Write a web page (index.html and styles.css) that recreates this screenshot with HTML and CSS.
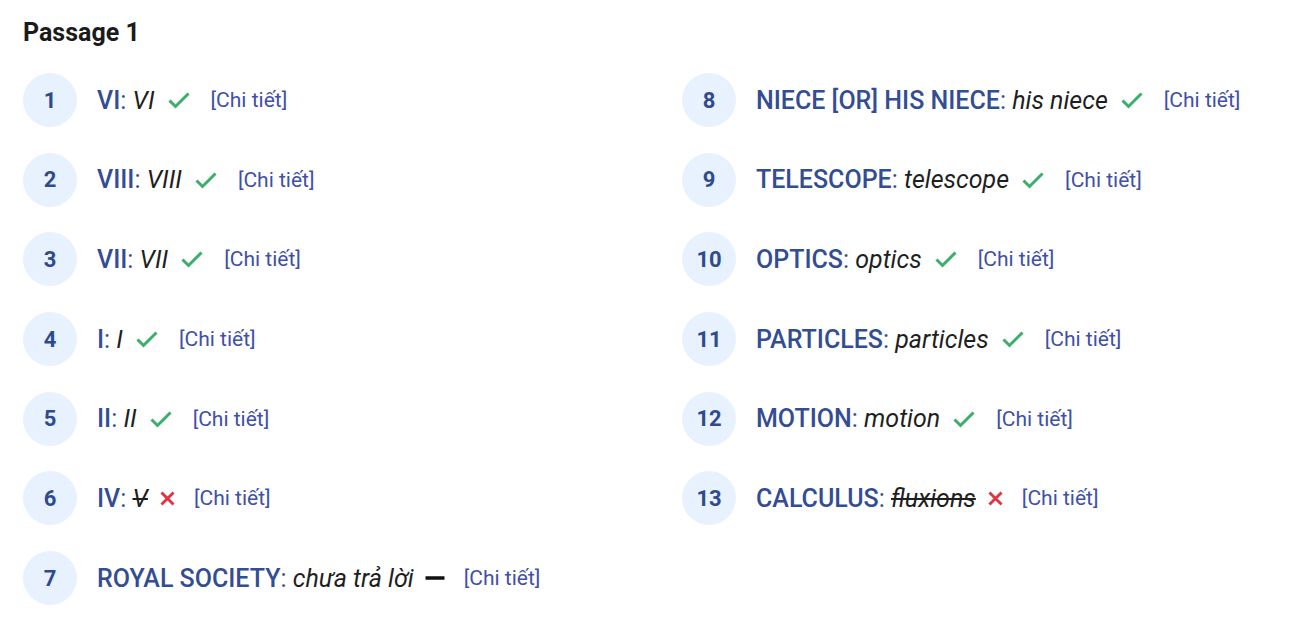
FILE: index.html
```html
<!DOCTYPE html>
<html lang="vi">
<head>
<meta charset="utf-8">
<link rel="stylesheet" href="styles.css">
</head>
<body>
<div class="page">
  <h2 class="title">Passage 1</h2>
  <div class="grid">
    <div class="col">
      <div class="item"><span class="num">1</span><span class="text"><span class="key">VI</span>: <span class="ans">VI</span></span><span class="icon ok"><svg viewBox="0 0 24 24"><path d="M2.5 12.5l6 6L21.5 5.5"/></svg></span><a class="more">[Chi tiết]</a></div>
      <div class="item"><span class="num">2</span><span class="text"><span class="key">VIII</span>: <span class="ans">VIII</span></span><span class="icon ok"><svg viewBox="0 0 24 24"><path d="M2.5 12.5l6 6L21.5 5.5"/></svg></span><a class="more">[Chi tiết]</a></div>
      <div class="item"><span class="num">3</span><span class="text"><span class="key">VII</span>: <span class="ans">VII</span></span><span class="icon ok"><svg viewBox="0 0 24 24"><path d="M2.5 12.5l6 6L21.5 5.5"/></svg></span><a class="more">[Chi tiết]</a></div>
      <div class="item"><span class="num">4</span><span class="text"><span class="key">I</span>: <span class="ans">I</span></span><span class="icon ok"><svg viewBox="0 0 24 24"><path d="M2.5 12.5l6 6L21.5 5.5"/></svg></span><a class="more">[Chi tiết]</a></div>
      <div class="item"><span class="num">5</span><span class="text"><span class="key">II</span>: <span class="ans">II</span></span><span class="icon ok"><svg viewBox="0 0 24 24"><path d="M2.5 12.5l6 6L21.5 5.5"/></svg></span><a class="more">[Chi tiết]</a></div>
      <div class="item"><span class="num">6</span><span class="text"><span class="key">IV</span>: <span class="ans wrong">V</span></span><span class="icon bad"><svg viewBox="0 0 24 24"><path d="M3.5 3.5l17 17M20.5 3.5l-17 17"/></svg></span><a class="more">[Chi tiết]</a></div>
      <div class="item"><span class="num">7</span><span class="text"><span class="key">ROYAL SOCIETY</span>: <span class="ans">chưa trả lời</span></span><span class="icon none"><svg viewBox="0 0 20 24"><path d="M0.5 12h19"/></svg></span><a class="more">[Chi tiết]</a></div>
    </div>
    <div class="col">
      <div class="item"><span class="num">8</span><span class="text"><span class="key">NIECE [OR] HIS NIECE</span>: <span class="ans">his niece</span></span><span class="icon ok"><svg viewBox="0 0 24 24"><path d="M2.5 12.5l6 6L21.5 5.5"/></svg></span><a class="more">[Chi tiết]</a></div>
      <div class="item"><span class="num">9</span><span class="text"><span class="key">TELESCOPE</span>: <span class="ans">telescope</span></span><span class="icon ok"><svg viewBox="0 0 24 24"><path d="M2.5 12.5l6 6L21.5 5.5"/></svg></span><a class="more">[Chi tiết]</a></div>
      <div class="item"><span class="num">10</span><span class="text"><span class="key">OPTICS</span>: <span class="ans">optics</span></span><span class="icon ok"><svg viewBox="0 0 24 24"><path d="M2.5 12.5l6 6L21.5 5.5"/></svg></span><a class="more">[Chi tiết]</a></div>
      <div class="item"><span class="num">11</span><span class="text"><span class="key">PARTICLES</span>: <span class="ans">particles</span></span><span class="icon ok"><svg viewBox="0 0 24 24"><path d="M2.5 12.5l6 6L21.5 5.5"/></svg></span><a class="more">[Chi tiết]</a></div>
      <div class="item"><span class="num">12</span><span class="text"><span class="key">MOTION</span>: <span class="ans">motion</span></span><span class="icon ok"><svg viewBox="0 0 24 24"><path d="M2.5 12.5l6 6L21.5 5.5"/></svg></span><a class="more">[Chi tiết]</a></div>
      <div class="item"><span class="num">13</span><span class="text"><span class="key">CALCULUS</span>: <span class="ans wrong">fluxions</span></span><span class="icon bad"><svg viewBox="0 0 24 24"><path d="M3.5 3.5l17 17M20.5 3.5l-17 17"/></svg></span><a class="more">[Chi tiết]</a></div>
    </div>
  </div>
</div>
</body>
</html>
```

FILE: styles.css
```css
* { box-sizing: border-box; }
html, body { margin: 0; padding: 0; background: #ffffff; }
body { font-family: Roboto, "Noto Sans", Arial, sans-serif; color: #1a1a1a; }
.page { padding: 18px 23px 0 23px; }
.title {
  margin: 0 0 25px 0;
  font-size: 25px;
  line-height: 30px;
  font-weight: 700;
  color: #1b1b1b;
}
.grid {
  display: grid;
  grid-template-columns: 634px 1fr;
  column-gap: 25px;
}
.col { display: flex; flex-direction: column; gap: 25.7px; }
.item {
  display: flex;
  align-items: center;
  height: 54px;
}
.num {
  flex: none;
  width: 54px;
  height: 54px;
  border-radius: 50%;
  background: #e8f1fe;
  color: #2f4b8f;
  font-weight: 700;
  font-size: 22px;
  display: flex;
  align-items: center;
  justify-content: center;
  margin-right: 20px;
}
.text { font-size: 25px; white-space: pre; color: #334d94; }
.key { color: #334d94; font-weight: 500; }
.ans { font-style: italic; color: #1f1f1f; }
.ans.wrong { text-decoration: line-through; text-decoration-thickness: 2px; }
.icon { display: inline-flex; align-items: center; justify-content: center; width: 24px; height: 24px; margin-left: 12px; margin-right: 20px; }
.icon svg { width: 24px; height: 24px; fill: none; stroke-width: 3; }
.icon.ok svg { stroke: #3aaf6c; }
.icon.bad { margin-left: 8px; margin-right: 14px; }
.icon.bad svg { stroke: #e2323f; width: 17px; height: 17px; stroke-width: 4; }
.icon.none { width: 20px; margin-left: 11px; margin-right: 19px; }
.icon.none svg { stroke: #111; width: 20px; height: 24px; stroke-width: 3.5; }
.more { color: #4050a8; font-size: 21px; }
```
